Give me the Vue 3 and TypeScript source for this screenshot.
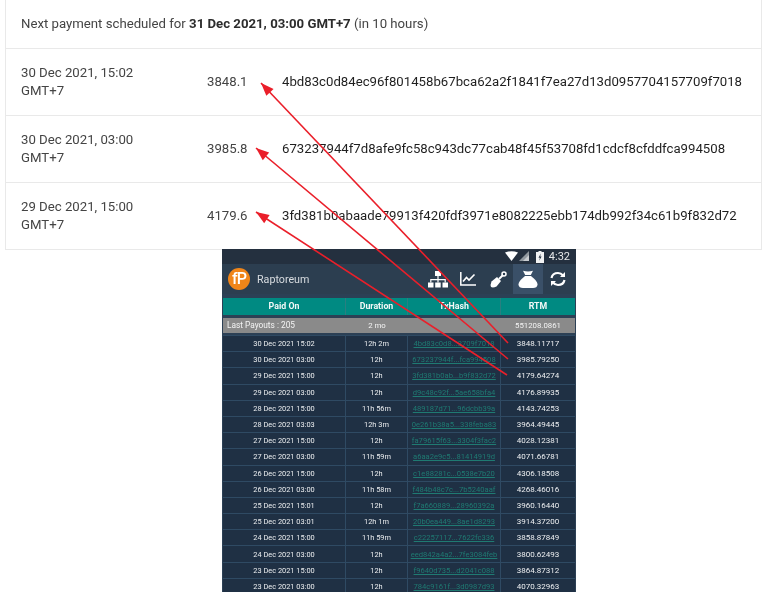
<script setup lang="ts">
interface Pay { rowDate: string; dur: string; hash: string; rtm: string }
const top = [
  { d: '30 Dec 2021, 15:02', a: '3848.1', h: '4bd83c0d84ec96f801458b67bca62a2f1841f7ea27d13d0957704157709f7018' },
  { d: '30 Dec 2021, 03:00', a: '3985.8', h: '673237944f7d8afe9fc58c943dc77cab48f45f53708fd1cdcf8cfddfca994508' },
  { d: '29 Dec 2021, 15:00', a: '4179.6', h: '3fd381b0abaade79913f420fdf3971e8082225ebb174db992f34c61b9f832d72' },
]
const rows: Pay[] = [
  { rowDate: '30 Dec 2021 15:02', dur: '12h 2m', hash: '4bd83c0d8...3709f7018', rtm: '3848.11717' },
  { rowDate: '30 Dec 2021 03:00', dur: '12h', hash: '673237944f...fca994508', rtm: '3985.79250' },
  { rowDate: '29 Dec 2021 15:00', dur: '12h', hash: '3fd381b0ab...b9f832d72', rtm: '4179.64274' },
  { rowDate: '29 Dec 2021 03:00', dur: '12h', hash: 'd9c48c92f...5ae658bfa4', rtm: '4176.89935' },
  { rowDate: '28 Dec 2021 15:00', dur: '11h 56m', hash: '489187d71...96dcbb39a', rtm: '4143.74253' },
  { rowDate: '28 Dec 2021 03:03', dur: '12h 3m', hash: '0e261b38a5...338feba83', rtm: '3964.49445' },
  { rowDate: '27 Dec 2021 15:00', dur: '12h', hash: 'fa79615f63...3304f3fac2', rtm: '4028.12381' },
  { rowDate: '27 Dec 2021 03:00', dur: '11h 59m', hash: 'a6aa2e9c5...81414919d', rtm: '4071.66781' },
  { rowDate: '26 Dec 2021 15:00', dur: '12h', hash: 'c1e88281c...0538e7b20', rtm: '4306.18508' },
  { rowDate: '26 Dec 2021 03:00', dur: '11h 58m', hash: 'f484b48c7c...7b5240aaf', rtm: '4268.46016' },
  { rowDate: '25 Dec 2021 15:01', dur: '12h', hash: 'f7a660889...28960392a', rtm: '3960.16440' },
  { rowDate: '25 Dec 2021 03:01', dur: '12h 1m', hash: '20b0ea449...8ae1d8293', rtm: '3914.37200' },
  { rowDate: '24 Dec 2021 15:00', dur: '11h 59m', hash: 'c22257117...7622fc336', rtm: '3858.87849' },
  { rowDate: '24 Dec 2021 03:00', dur: '12h', hash: 'eed842a4a2...7fe3084feb', rtm: '3800.62493' },
  { rowDate: '23 Dec 2021 15:00', dur: '12h', hash: 'f9640d735...d2041c088', rtm: '3864.87312' },
  { rowDate: '23 Dec 2021 03:00', dur: '12h', hash: '784c9161f...3d0987d93', rtm: '4070.32963' },
]
const arrows = [
  { x1: 508, y1: 343, x2: 261, y2: 83 },
  { x1: 508, y1: 359, x2: 256, y2: 148 },
  { x1: 507, y1: 375, x2: 256, y2: 212 },
]
function head(a: { x1: number; y1: number; x2: number; y2: number }): string {
  const dx = a.x1 - a.x2, dy = a.y1 - a.y2
  const l = Math.hypot(dx, dy), ux = dx / l, uy = dy / l
  const bx = a.x2 + ux * 13, by = a.y2 + uy * 13
  return `${a.x2},${a.y2} ${bx - uy * 5},${by + ux * 5} ${bx + uy * 5},${by - ux * 5}`
}
</script>

<template>
  <div class="page">
    <section class="card">
      <div class="next">Next payment scheduled for <b>31 Dec 2021, 03:00 GMT+7</b> (in 10 hours)</div>
      <div v-for="t in top" :key="t.h" class="pay">
        <div class="when">{{ t.d }}<br />GMT+7</div>
        <div class="amt">{{ t.a }}</div>
        <div class="hash">{{ t.h }}</div>
      </div>
    </section>

    <section class="phone">
      <div class="status">
        <svg width="25" height="11" viewBox="0 0 25 11" class="sig">
          <path d="M0 1.500Q6.500-1 13 1.500L6.500 10Z" fill="#fff" />
          <path d="M24 0V10H14Z" fill="#8f979e" />
          <path d="M24 4V10H18Z" fill="#c9cdd1" />
        </svg>
        <svg width="8" height="12" viewBox="0 0 8 12" class="bat">
          <path d="M2.500 0H5.500V1H8V12H0V1H2.500Z" fill="#f2f3f4" />
          <path d="M4.800 2.500L2.500 6.800H3.900L3.200 9.800L5.600 5.400H4.200Z" fill="#24303f" />
        </svg>
        <span class="clock">4:32</span>
      </div>
      <div class="bar">
        <div class="logo">fP</div>
        <span class="title">Raptoreum</span>
        <div class="tools">
          <div class="tool">
            <svg width="20" height="17" viewBox="0 0 20 17" fill="#fff">
              <rect x="7" y="0" width="6" height="5" />
              <rect x="0" y="11.500" width="5.500" height="5" /><rect x="7.200" y="11.500" width="5.500" height="5" /><rect x="14.500" y="11.500" width="5.500" height="5" />
              <path d="M9.400 5H10.600V8H17.800V11.500H16.600V9.200H10.600V11.500H9.400V9.200H3.400V11.500H2.200V8H9.400Z" />
            </svg>
          </div>
          <div class="tool">
            <svg width="16" height="14" viewBox="0 0 16 14" fill="none" stroke="#fff">
              <path d="M.8 0V13H16" stroke-width="1.500" />
              <path d="M3 9.500L6.500 5.500L9 8L14.500 2.500" stroke-width="1.600" />
            </svg>
          </div>
          <div class="tool">
            <svg width="17" height="17" viewBox="0 0 17 17">
              <path d="M7 6L11 10L6.500 15.500Q3 17 1 16Q0 14 1.500 10.500Z" fill="#fff" />
              <path d="M9 8L13 4" stroke="#fff" stroke-width="2" />
              <circle cx="14" cy="3" r="2" fill="none" stroke="#fff" stroke-width="1.500" />
            </svg>
          </div>
          <div class="tool on">
            <svg width="20" height="18" viewBox="0 0 20 18" fill="#fff">
              <path d="M5 .8Q10 2.200 15 .8L12.800 5H7.200Z" />
              <path d="M7 6H13C16 8.500 19.500 11.500 19.500 14.500C19.500 17 17.500 18 15 18H5C2.500 18 .5 17 .5 14.500C.5 11.500 4 8.500 7 6Z" />
            </svg>
          </div>
          <div class="tool">
            <svg width="16" height="16" viewBox="0 0 16 16" fill="none" stroke="#fff" stroke-width="2.200">
              <path d="M1.500 7Q2.500 2 8 2Q11 2 13 4.500" />
              <path d="M14.500 9Q13.500 14 8 14Q5 14 3 11.500" />
              <path d="M15 1V6H10Z" fill="#fff" stroke="none" />
              <path d="M1 15V10H6Z" fill="#fff" stroke="none" />
            </svg>
          </div>
        </div>
      </div>
      <div class="table">
        <div class="grid th">
          <span>Paid On</span><span>Duration</span><span>TxHash</span><span>RTM</span>
        </div>
        <div class="grid sum">
          <span class="left">Last Payouts : 205</span><span>2 mo</span><span></span><span>551208.0861</span>
        </div>
        <div v-for="r in rows" :key="r.rtm" class="grid td">
          <span>{{ r.rowDate }}</span><span>{{ r.dur }}</span><a>{{ r.hash }}</a><span class="rtm">{{ r.rtm }}</span>
        </div>
      </div>
    </section>

    <svg class="arrows" width="768" height="592" viewBox="0 0 768 592">
      <g v-for="a in arrows" :key="a.y2">
        <line :x1="a.x1" :y1="a.y1" :x2="a.x2" :y2="a.y2" stroke="#ea1f2a" stroke-width="1.600" />
        <polygon :points="head(a)" fill="#ea1f2a" />
      </g>
    </svg>
  </div>
</template>

<style scoped>
.page {
  width: 768px;
  height: 592px;
  overflow: hidden;
  position: relative;
  background: #fff;
  font-family: Roboto, "Liberation Sans", sans-serif;
}
.card {
  margin: 0 6px 0 5px;
  border-left: 1px solid #e9e9e9;
  border-right: 1px solid #e9e9e9;
  color: #444;
  font-size: 13.200px;
  line-height: 18.500px;
  filter: blur(0.3px);
}
.next {
  height: 49px;
  box-sizing: border-box;
  padding: 15px 15px 0;
  border-bottom: 1px solid #e9e9e9;
}
.next b { color: #2c2c2c; font-weight: 700; }
.pay {
  height: 67px;
  box-sizing: border-box;
  border-bottom: 1px solid #e9e9e9;
  display: flex;
  align-items: center;
  padding-left: 15px;
}
.when { width: 186px; flex: none; }
.amt { width: 75px; flex: none; }
.hash { flex: none; color: #1f1f1f; white-space: nowrap; }
.phone {
  margin: -1px 0 0 222px;
  width: 354px;
  height: 343px;
  background: #2c4055;
  overflow: hidden;
  filter: blur(0.45px);
}
.status {
  height: 15px;
  background: #24303f;
  display: flex;
  align-items: center;
  justify-content: flex-end;
  padding-right: 6px;
  color: #e6e8ea;
}
.sig { margin-right: 6px; }
.bat { margin-right: 5px; }
.clock { font-size: 11px; }
.bar {
  height: 30px;
  background: #2c3e50;
  display: flex;
  align-items: center;
  padding-left: 6px;
}
.logo {
  width: 22px;
  height: 22px;
  border-radius: 50%;
  background: #f08519;
  color: #fff;
  font-size: 16px;
  font-weight: 500;
  line-height: 22px;
  text-align: center;
  letter-spacing: -1px;
}
.title {
  margin-left: 7px;
  color: #d8dce0;
  font-size: 10.700px;
}
.tools { margin-left: auto; display: flex; height: 100%; margin-right: 3px; }
.tool {
  width: 30px;
  display: flex;
  align-items: center;
  justify-content: center;
}
.tool.on { background: #3a5068; }
.table {
  padding: 3.500px 1px 0;
  font-size: 7.400px;
  color: #eceef0;
  text-align: center;
}
.grid {
  display: grid;
  grid-template-columns: 123px 62px 93px 74px;
  align-items: stretch;
}
.grid > * {
  display: flex;
  align-items: center;
  justify-content: center;
  border-right: 1px solid #2f4a63;
  box-sizing: border-box;
  white-space: nowrap;
}
.grid > *:nth-child(4) { border-right: 0; }
.th {
  height: 17px;
  background: #008a82;
  color: #f2f8f7;
  font-size: 8.800px;
  font-weight: 700;
}
.th > * { border-right-color: #2a7f80; }
.sum {
  height: 15px;
  margin: 3px 0 2.500px;
  background: #8a8a8a;
  color: #f4f4f4;
  font-size: 7.800px;
}
.sum > * { border: 0; }
.sum .left { justify-content: flex-start; padding-left: 4px; font-size: 8.300px; }
.td {
  height: 16.200px;
  background: #1f3044;
  border-top: 1px solid #2f4a63;
  box-sizing: border-box;
}
.td .rtm { font-size: 8px; }
.td a {
  color: #1f7a72;
  text-decoration: underline;
  font-size: 7.600px;
}
.arrows { position: absolute; left: 0; top: 0; pointer-events: none; }
</style>
